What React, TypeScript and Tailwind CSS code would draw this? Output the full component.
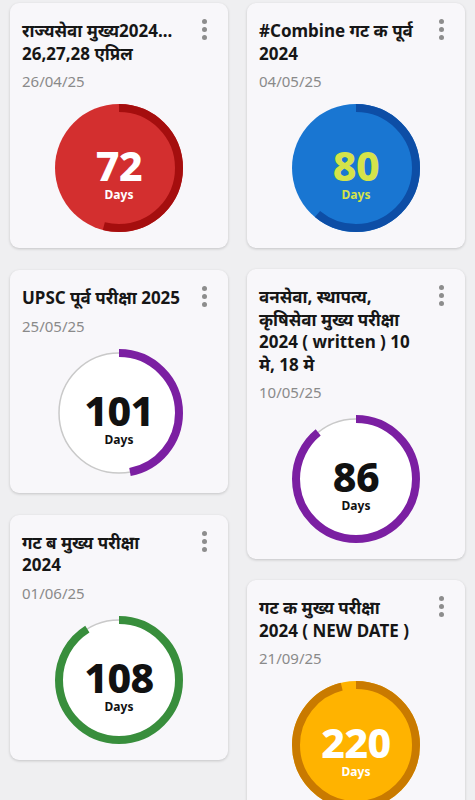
type Exam = {
  title: string[];
  date: string;
  days: number;
  progress: number;
  fill: string;
  arc: string;
  text: string;
};

const left: Exam[] = [
  {
    title: ["राज्यसेवा मुख्य2024...", "26,27,28 एप्रिल"],
    date: "26/04/25",
    days: 72,
    progress: 0.54,
    fill: "#d32f2f",
    arc: "#a50e0e",
    text: "#ffffff",
  },
  {
    title: ["UPSC पूर्व परीक्षा 2025"],
    date: "25/05/25",
    days: 101,
    progress: 0.47,
    fill: "#ffffff",
    arc: "#7b1fa2",
    text: "#111111",
  },
  {
    title: ["गट ब मुख्य परीक्षा", "2024"],
    date: "01/06/25",
    days: 108,
    progress: 0.91,
    fill: "#ffffff",
    arc: "#388e3c",
    text: "#111111",
  },
];

const right: Exam[] = [
  {
    title: ["#Combine गट क पूर्व", "2024"],
    date: "04/05/25",
    days: 80,
    progress: 0.61,
    fill: "#1976d2",
    arc: "#0d4ea6",
    text: "#d4e34a",
  },
  {
    title: ["वनसेवा, स्थापत्य,", "कृषिसेवा मुख्य परीक्षा", "2024 ( written ) 10", "मे, 18 मे"],
    date: "10/05/25",
    days: 86,
    progress: 0.89,
    fill: "#ffffff",
    arc: "#7b1fa2",
    text: "#111111",
  },
  {
    title: ["गट क मुख्य परीक्षा", "2024 ( NEW DATE )"],
    date: "21/09/25",
    days: 220,
    progress: 0.96,
    fill: "#ffb300",
    arc: "#c97a00",
    text: "#ffffff",
  },
];

function Ring({ exam }: { exam: Exam }) {
  const r = 60;
  const c = 2 * Math.PI * r;
  const white = exam.fill === "#ffffff";
  return (
    <div className="relative w-[128px] h-[128px]">
      <svg width="128" height="128" viewBox="0 0 128 128" className="absolute inset-0">
        {white ? (
          <circle cx="64" cy="64" r="60" fill="#ffffff" stroke="#c9c9c9" strokeWidth="1.5" />
        ) : (
          <circle cx="64" cy="64" r="64" fill={exam.fill} />
        )}
        <circle
          cx="64"
          cy="64"
          r={r}
          fill="none"
          stroke={exam.arc}
          strokeWidth="8"
          strokeDasharray={`${c * exam.progress} ${c}`}
          transform="rotate(-90 64 64)"
        />
      </svg>
      <div
        className="absolute inset-0 flex flex-col items-center pt-[45px]"
        style={{ color: exam.text }}
      >
        <span className="text-[41px] leading-[32px] font-extrabold tracking-[-0.5px]">{exam.days}</span>
        <span className="text-[12px] leading-[14px] font-bold mt-[7px]">Days</span>
      </div>
    </div>
  );
}

function Card({ exam }: { exam: Exam }) {
  return (
    <div className="bg-[#f8f7fa] rounded-[9px] shadow-[0_1px_3px_rgba(0,0,0,0.18)] pt-[17px] pb-4 pl-3 pr-[21px]">
      <div className="flex justify-between items-start">
        <div className="text-[17px] leading-[22.5px] font-bold text-[#161616]">
          {exam.title.map((l) => (
            <div key={l} className="h-[22.5px] whitespace-nowrap">{l}</div>
          ))}
        </div>
        <div className="flex flex-col gap-[3px] mt-[-1px]">
          <span className="w-[5px] h-[5px] rounded-full bg-[#8d8d8d]" />
          <span className="w-[5px] h-[5px] rounded-full bg-[#8d8d8d]" />
          <span className="w-[5px] h-[5px] rounded-full bg-[#8d8d8d]" />
        </div>
      </div>
      <div className="h-[24px] text-[15px] leading-[24px] mt-[4px] text-[#8a8a8a]">{exam.date}</div>
      <div className="flex justify-center mt-[11px] pl-[9px]">
        <Ring exam={exam} />
      </div>
    </div>
  );
}

export default function App() {
  return (
    <div
      className="w-[475px] h-[800px] overflow-hidden bg-[#efeff1] flex gap-[19px] px-[10px] pt-[3px]"
      style={{ fontFamily: '"Noto Sans", "Noto Sans Devanagari", "Lohit Devanagari", sans-serif' }}
    >
      <div className="w-[218px] flex flex-col gap-[22px]">
        {left.map((e) => (
          <Card key={e.date} exam={e} />
        ))}
      </div>
      <div className="w-[218px] flex flex-col gap-[21px]">
        {right.map((e) => (
          <Card key={e.date} exam={e} />
        ))}
      </div>
    </div>
  );
}
